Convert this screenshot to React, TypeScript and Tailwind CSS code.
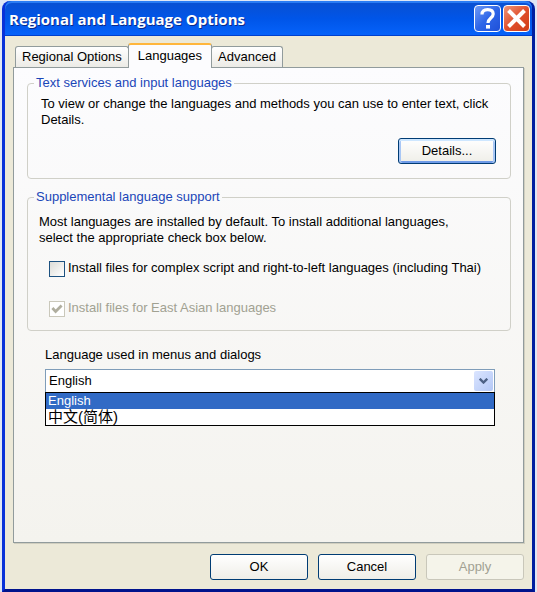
import React, { useState } from 'react';
import clsx from 'clsx';

const tabs = ['Regional Options', 'Languages', 'Advanced'];
const languages = [
  { name: 'English', lang: 'en' },
  { name: '中文(简体)', lang: 'zh' },
];

interface DialogButtonProps {
  children: React.ReactNode;
  focused?: boolean;
  disabled?: boolean;
}

function DialogButton({ children, focused, disabled }: DialogButtonProps) {
  return (
    <button
      type="button"
      disabled={disabled}
      className={clsx(
        'h-[26px] w-[98px] rounded-[3px] border text-center',
        disabled
          ? 'border-[#c9c7ba] bg-[#f5f4ea] text-[#a1a192]'
          : 'border-[#003c74] bg-linear-to-b from-white to-[#efeee8] text-black',
        focused && 'shadow-[inset_0_2px_0_#cee7ff,inset_2px_0_0_#a9c7f5,inset_-2px_0_0_#a9c7f5,inset_0_-2px_0_#6f9be8]',
      )}
    >
      {children}
    </button>
  );
}

interface GroupProps {
  title: string;
  className?: string;
  children: React.ReactNode;
}

function Group({ title, className, children }: GroupProps) {
  return (
    <fieldset className={clsx('min-w-0 rounded-[4px] border border-[#d0d0c8]', className)}>
      <legend className="ml-1.5 px-0.5 text-[#1a46b8]">{title}</legend>
      {children}
    </fieldset>
  );
}

function TitleBar() {
  return (
    <header className="flex h-[35px] items-center gap-0.5 rounded-t-[7px] bg-linear-to-b from-[#0a4fd0] via-[#0055e8] to-[#0663fb] pr-0.5 pl-1 shadow-[inset_0_2px_0_#2a7cf4,inset_0_-1px_0_#0040cc]">
      <h1 className="flex-1 font-['Open_Sans',sans-serif] text-[15px] leading-5 font-bold text-white [text-shadow:1px_1px_#0a2a8c]">
        Regional and Language Options
      </h1>
      <button
        type="button"
        aria-label="Help"
        className="flex size-[27px] items-center justify-center rounded-[4px] border border-white bg-linear-to-br from-[#6f9af5] via-[#2f66e8] to-[#1f50d8]"
      >
        <svg viewBox="0 0 25 25" className="size-[25px]" fill="none" stroke="white" strokeWidth="3.2">
          <path d="M7 8.5C7 4.8 9.3 3.6 12.7 3.6S18.2 5.2 18.2 8c0 4-5.2 4-5.2 9" />
          <path d="M11 20.8h4" strokeWidth="3.6" />
        </svg>
      </button>
      <button
        type="button"
        aria-label="Close"
        className="flex size-[27px] items-center justify-center rounded-[4px] border border-white bg-linear-to-br from-[#ee9478] via-[#e0502c] to-[#cf3d18]"
      >
        <svg viewBox="0 0 25 25" className="size-[25px]" fill="none" stroke="white" strokeWidth="4">
          <path d="M4.5 4.5l16 16M20.5 4.5l-16 16" />
        </svg>
      </button>
    </header>
  );
}

function Tabs({ active, onSelect }: { active: string; onSelect: (tab: string) => void }) {
  return (
    <div role="tablist" className="flex items-end pl-0.5">
      {tabs.map((tab) => (
        <button
          key={tab}
          type="button"
          role="tab"
          aria-selected={tab === active}
          onClick={() => onSelect(tab)}
          className={clsx(
            'rounded-t-[3px] border border-[#919b9c]',
            tab === active
              ? 'z-10 -mx-px -mb-px h-[25px] border-t-2 border-b-0 border-t-[#ffb63c] bg-[#fcfcfe] px-[9px] pb-0.5'
              : 'h-[21px] border-b-0 bg-linear-to-b from-white to-[#ecebe6] px-1.5',
          )}
        >
          {tab}
        </button>
      ))}
    </div>
  );
}

function LanguageSelect() {
  const [language, setLanguage] = useState('English');

  return (
    <div className="mt-4 mr-4 ml-[18px]">
      <label htmlFor="ui-language" className="block">
        Language used in menus and dialogs
      </label>
      <div className="relative mt-1.5">
        <select
          id="ui-language"
          value={language}
          onChange={(e) => setLanguage(e.target.value)}
          className="block h-6 w-full appearance-none border border-[#7f9db9] bg-white px-[3px]"
        >
          {languages.map(({ name }) => (
            <option key={name}>{name}</option>
          ))}
        </select>
        <span className="pointer-events-none absolute top-0.5 right-0.5 flex h-5 w-[19px] items-center justify-center rounded-[2px] bg-linear-to-br from-[#dbe5ff] to-[#b4c8f6]">
          <svg viewBox="0 0 9 6" className="h-1.5 w-[9px]" fill="none" stroke="#4d6185" strokeWidth="2.4">
            <path d="M0.7 0.7l3.8 3.8l3.8-3.8" />
          </svg>
        </span>
        <ul role="listbox" className="absolute inset-x-0 top-[23px] border border-black bg-white">
          {languages.map(({ name, lang }) => (
            <li
              key={name}
              lang={lang}
              role="option"
              aria-selected={name === language}
              onClick={() => setLanguage(name)}
              className={clsx(
                'h-4 px-0.5',
                lang === 'zh' && 'text-[15px] leading-4',
                name === language && 'bg-[#316ac5] text-white',
              )}
            >
              {name}
            </li>
          ))}
        </ul>
      </div>
    </div>
  );
}

export default function App() {
  const [tab, setTab] = useState('Languages');

  return (
    <div className="flex min-h-screen bg-[#dfe6f5] pt-px pr-0.5 pl-0.5 font-['Liberation_Sans','Noto_Sans_CJK_SC',sans-serif] text-[13px] leading-4 text-black">
      <main className="flex flex-1 flex-col rounded-t-[8px] border-x-[3px] border-b-[3px] border-[#0831d9] border-r-[#001ea0] border-b-[#00138c] bg-[#0054e3]">
        <TitleBar />
        <div className="flex flex-1 flex-col bg-[#ece9d8] px-2 pt-[7px] pb-[9px]">
          <Tabs active={tab} onSelect={setTab} />
          <section className="flex-1 border border-[#919b9c] bg-linear-to-b from-[#fcfcfe] to-[#f4f3ee] px-[13px] pt-[7px] pr-3 shadow-[1px_1px_0_#d0cebf]">
            <Group title="Text services and input languages">
              <p className="pt-[5px] pr-3 pl-[13px]">
                To view or change the languages and methods you can use to enter text, click Details.
              </p>
              <div className="flex justify-end pt-2.5 pr-3.5 pb-3.5">
                <DialogButton focused>Details...</DialogButton>
              </div>
            </Group>
            <Group title="Supplemental language support" className="mt-2.5">
              <p className="pt-[9px] pr-10 pl-[11px]">
                Most languages are installed by default. To install additional languages, select the
                appropriate check box below.
              </p>
              <label className="mt-3.5 ml-[21px] flex items-start gap-[3px]">
                <input
                  type="checkbox"
                  className="mt-px size-4 appearance-none border border-[#1c5180] bg-linear-to-br from-[#dcdcd7] to-white"
                />
                Install files for complex script and right-to-left languages (including Thai)
              </label>
              <label className="mt-[23px] mb-[13px] ml-[21px] flex items-start gap-[3px] text-[#a1a192]">
                <span className="relative mt-px size-4">
                  <input
                    type="checkbox"
                    checked
                    readOnly
                    disabled
                    className="block size-4 appearance-none border border-[#cac8bb] bg-white"
                  />
                  <svg viewBox="0 0 16 16" className="absolute inset-0 size-4" fill="none" stroke="#b0ae9f" strokeWidth="2.8">
                    <path d="M3.4 7l3.2 3.4L12.6 4.4" />
                  </svg>
                </span>
                Install files for East Asian languages
              </label>
            </Group>
            <LanguageSelect />
          </section>
          <footer className="mt-[11px] flex justify-end gap-2.5">
            <DialogButton>OK</DialogButton>
            <DialogButton>Cancel</DialogButton>
            <DialogButton disabled>Apply</DialogButton>
          </footer>
        </div>
      </main>
    </div>
  );
}
